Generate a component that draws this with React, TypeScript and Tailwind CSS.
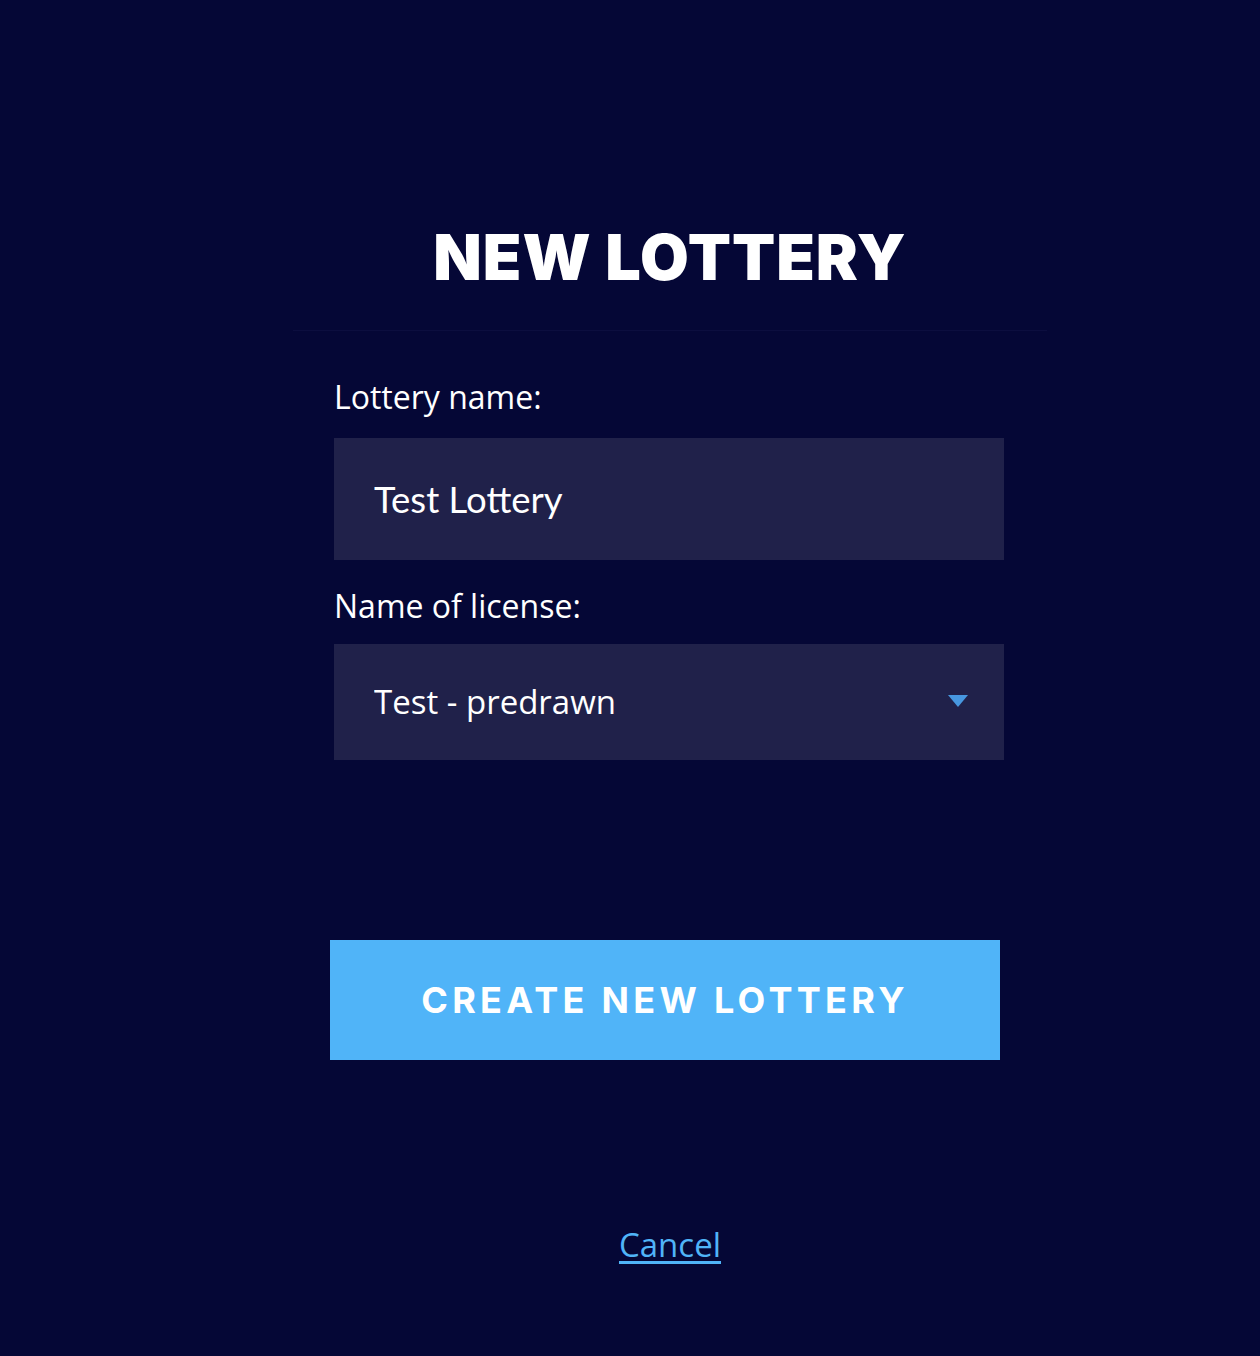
import { useState } from "react";

const NewLottery = () => {
	const [name, setName] = useState("Test Lottery");
	const [license, setLicense] = useState("Test - predrawn");

	return (
		<div className="min-h-[1356px] w-full bg-[#050736] pt-[226px]">
			<div className="ml-[293px] w-[754px]">
				{/* Header */}
				<h1 className="text-center font-['Inter',sans-serif] text-[63px] font-black leading-none tracking-[1px] text-white">
					NEW LOTTERY
				</h1>
				<div className="mt-[41px] h-px bg-[#0c0e3f]" />

				{/* Form */}
				<div className="px-[41px] pt-[46px]">
					<label className="block font-['Open_Sans',sans-serif] text-[32px] leading-[40px] text-white">
						Lottery name:
					</label>
					<input
						value={name}
						onChange={(e) => setName(e.target.value)}
						className="mt-[21px] block h-[122px] w-[670px] bg-[#20214a] pl-[40px] font-['Lato',sans-serif] text-[36.5px] text-white outline-none"
					/>

					<label className="mt-[26px] block font-['Open_Sans',sans-serif] text-[32px] leading-[40px] text-white">
						Name of license:
					</label>
					<div className="relative mt-[18px] flex h-[116px] w-[670px] items-center bg-[#20214a] pl-[40px]">
						<select
							value={license}
							onChange={(e) => setLicense(e.target.value)}
							className="h-full w-full appearance-none bg-transparent font-['Open_Sans',sans-serif] text-[33px] text-white outline-none"
						>
							<option>Test - predrawn</option>
						</select>
						<svg
							className="pointer-events-none absolute right-[36px] top-[51px]"
							width="20"
							height="12"
							viewBox="0 0 20 12"
						>
							<path d="M0 0H20L10 12Z" fill="#4797e0" />
						</svg>
					</div>

					<button className="ml-[-4px] mt-[180px] block h-[120px] w-[670px] bg-[#50b4f8] font-['Inter',sans-serif] text-[36px] font-bold tracking-[4.3px] text-white">
						CREATE NEW LOTTERY
					</button>

					<div className="mt-[160px] text-center">
						<a
							href="#"
							className="font-['Open_Sans',sans-serif] text-[33px] text-[#50b4f8] underline underline-offset-4"
						>
							Cancel
						</a>
					</div>
				</div>
			</div>
		</div>
	);
};

export default function App() {
	return <NewLottery />;
}
